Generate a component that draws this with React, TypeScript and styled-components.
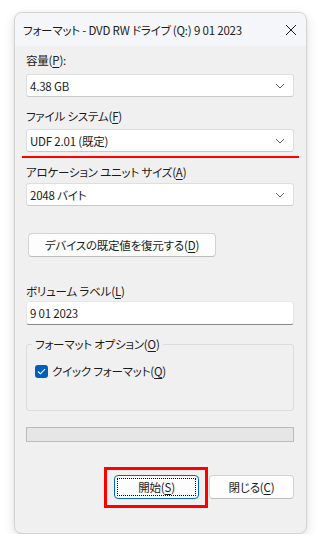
import React from "react";
import styled, { createGlobalStyle } from "styled-components";

const GlobalStyle = createGlobalStyle`
  html, body {
    margin: 0;
    padding: 0;
    background: #ffffff;
  }
  body {
    font-family: "Noto Sans CJK JP", "Noto Sans", sans-serif;
    font-size: 11.5px;
    letter-spacing: -0.2px;
    font-feature-settings: "palt" 1;
    color: #1b1b1b;
  }
  button {
    font-feature-settings: "palt" 1;
    letter-spacing: -0.2px;
  }
`;

const Page = styled.div`
  padding: 12px 0 0 14px;
`;

const Window = styled.div`
  width: 293px;
  box-sizing: border-box;
  border: 1px solid #d4d4d4;
  border-radius: 8px;
  overflow: hidden;
  background: #f0f0f0;
  box-shadow: 0 4px 12px rgba(0, 0, 0, 0.12), 0 0 3px rgba(0, 0, 0, 0.06);
`;

const TitleBar = styled.div`
  height: 33px;
  display: flex;
  align-items: center;
  justify-content: space-between;
  padding: 0 8px 0 8px;
  background: #f4f6f9;
  line-height: 16px;
`;

const Title = styled.span`
  white-space: nowrap;
`;

const CloseButton = styled.button`
  width: 14px;
  height: 14px;
  padding: 0;
  border: none;
  background: transparent;
  display: flex;
  align-items: center;
  justify-content: center;
`;

const Body = styled.div`
  display: flex;
  flex-direction: column;
  padding: 0 12px 34px 11px;
`;

const Label = styled.div<{ $top: number }>`
  margin-top: ${(p) => p.$top}px;
  line-height: 16px;
  height: 16px;
  white-space: nowrap;
`;

const Key = styled.u`
  text-underline-offset: 2px;
`;

const Combo = styled.div<{ $top: number }>`
  margin-top: ${(p) => p.$top}px;
  height: 23px;
  box-sizing: border-box;
  display: flex;
  align-items: center;
  justify-content: space-between;
  padding: 0 8px 0 3px;
  background: #ffffff;
  border: 1px solid #dedede;
  border-bottom-color: #c9c9c9;
  border-radius: 3px;
`;

const TextInput = styled.div<{ $top: number }>`
  margin-top: ${(p) => p.$top}px;
  height: 24px;
  box-sizing: border-box;
  display: flex;
  align-items: center;
  padding: 0 3px;
  background: #ffffff;
  border: 1px solid #e6e6e6;
  border-bottom: 1px solid #8a8a8a;
  border-radius: 3px;
`;

const RedLine = styled.div`
  margin: 4px -5px 0 -4px;
  height: 2px;
  background: #ff0000;
`;

const PushButton = styled.button<{ $focused?: boolean }>`
  height: 24px;
  box-sizing: border-box;
  font: inherit;
  color: #1b1b1b;
  background: #fdfdfd;
  border: 1px solid ${(p) => (p.$focused ? "#0067c0" : "#d3d3d3")};
  border-bottom-color: ${(p) => (p.$focused ? "#0067c0" : "#bdbdbd")};
  border-radius: 4px;
  padding: 0;
  display: flex;
  align-items: center;
  justify-content: center;
  position: relative;
`;

const ResetButton = styled(PushButton)`
  margin: 27px 0 0 2px;
  width: 188px;
`;

const FocusRing = styled.span`
  position: absolute;
  inset: 2px;
  border: 1px dotted #000000;
  border-radius: 1px;
  pointer-events: none;
`;

const Group = styled.fieldset`
  margin: 11px 0 0;
  padding: 0 5px 31px;
  border: 1px solid #dcdcdc;
  border-radius: 3px;
  min-width: 0;
`;

const Legend = styled.legend`
  padding: 0 3px;
  line-height: 16px;
`;

const CheckRow = styled.label`
  margin: 11px 0 0 3px;
  display: flex;
  align-items: center;
  gap: 4px;
  line-height: 16px;
`;

const CheckBox = styled.span`
  width: 13px;
  height: 13px;
  border-radius: 3px;
  background: #005fb8;
  display: flex;
  align-items: center;
  justify-content: center;
`;

const Progress = styled.div`
  margin-top: 16px;
  height: 15px;
  box-sizing: border-box;
  background: #e6e6e6;
  border: 1px solid #bcbcbc;
`;

const ButtonRow = styled.div`
  margin-top: 33px;
  display: flex;
  justify-content: flex-end;
  gap: 10px;
`;

const DialogButton = styled(PushButton)`
  width: 85px;
`;

const Marked = styled.div`
  position: relative;
`;

const RedBox = styled.div`
  position: absolute;
  top: -8px;
  left: -10px;
  right: -9px;
  bottom: -9px;
  border: 3px solid #ff0000;
  pointer-events: none;
`;

const Chevron = () => (
  <svg width="10" height="6" viewBox="0 0 10 6">
    <path d="M1 1 L5 5 L9 1" fill="none" stroke="#5f5f5f" strokeWidth="1" />
  </svg>
);

type SelectProps = { top: number; value: string };

function Select({ top, value }: SelectProps) {
  return (
    <Combo $top={top}>
      <span>{value}</span>
      <Chevron />
    </Combo>
  );
}

export default function App() {
  return (
    <>
      <GlobalStyle />
      <Page>
        <Window>
          <TitleBar>
            <Title>フォーマット - DVD RW ドライブ (Q:) 9 01 2023</Title>
            <CloseButton aria-label="閉じる">
              <svg width="12" height="12" viewBox="0 0 12 12">
                <path d="M1 1 L11 11 M11 1 L1 11" stroke="#1b1b1b" strokeWidth="1" />
              </svg>
            </CloseButton>
          </TitleBar>
          <Body>
            <Label $top={6}>
              容量(<Key>P</Key>):
            </Label>
            <Select top={6} value="4.38 GB" />
            <Label $top={11}>
              ファイル システム(<Key>F</Key>)
            </Label>
            <Select top={5} value="UDF 2.01 (既定)" />
            <RedLine />
            <Label $top={6}>
              アロケーション ユニット サイズ(<Key>A</Key>)
            </Label>
            <Select top={3} value="2048 バイト" />
            <ResetButton>
              デバイスの既定値を復元する(<Key>D</Key>)
            </ResetButton>
            <Label $top={26}>
              ボリューム ラベル(<Key>L</Key>)
            </Label>
            <TextInput $top={2}>9 01 2023</TextInput>
            <Group>
              <Legend>
                フォーマット オプション(<Key>O</Key>)
              </Legend>
              <CheckRow>
                <CheckBox>
                  <svg width="9" height="7" viewBox="0 0 9 7">
                    <path d="M1 3.5 L3.4 5.8 L8 1.2" fill="none" stroke="#ffffff" strokeWidth="1.1" />
                  </svg>
                </CheckBox>
                <span>
                  クイック フォーマット(<Key>Q</Key>)
                </span>
              </CheckRow>
            </Group>
            <Progress />
            <ButtonRow>
              <Marked>
                <DialogButton $focused>
                  <FocusRing />
                  開始(<Key>S</Key>)
                </DialogButton>
                <RedBox />
              </Marked>
              <DialogButton>
                閉じる(<Key>C</Key>)
              </DialogButton>
            </ButtonRow>
          </Body>
        </Window>
      </Page>
    </>
  );
}
